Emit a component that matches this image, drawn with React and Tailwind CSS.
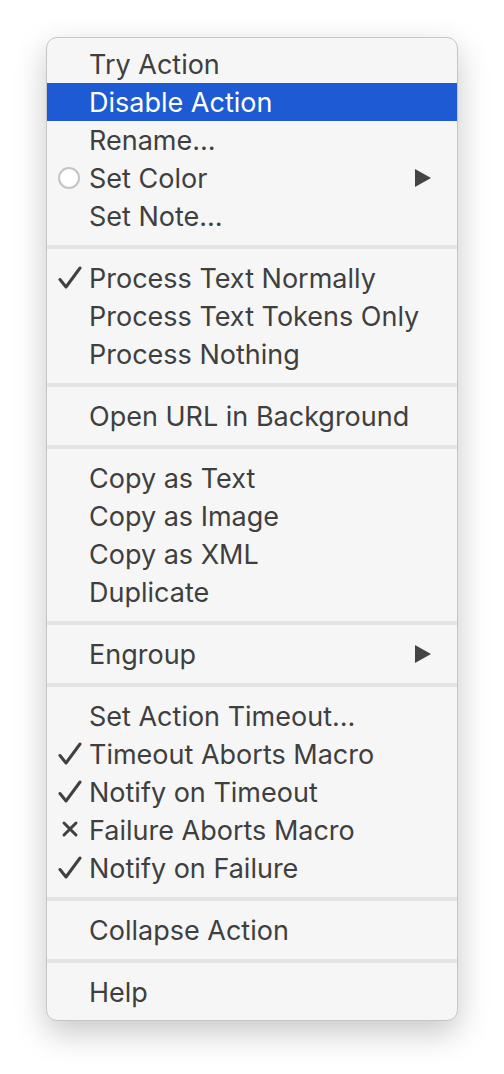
import { Fragment } from "react";

const GROUPS = [
    [
        { label: "Try Action" },
        { label: "Disable Action", active: true },
        { label: "Rename…" },
        { label: "Set Color", mark: "circle", submenu: true },
        { label: "Set Note…" },
    ],
    [
        { label: "Process Text Normally", mark: "check" },
        { label: "Process Text Tokens Only" },
        { label: "Process Nothing" },
    ],
    [{ label: "Open URL in Background" }],
    [
        { label: "Copy as Text" },
        { label: "Copy as Image" },
        { label: "Copy as XML" },
        { label: "Duplicate" },
    ],
    [{ label: "Engroup", submenu: true }],
    [
        { label: "Set Action Timeout…" },
        { label: "Timeout Aborts Macro", mark: "check" },
        { label: "Notify on Timeout", mark: "check" },
        { label: "Failure Aborts Macro", mark: "cross" },
        { label: "Notify on Failure", mark: "check" },
    ],
    [{ label: "Collapse Action" }],
    [{ label: "Help" }],
];

function Mark({ type }) {
    if (type === "check") {
        return (
            <svg width="26" height="24" viewBox="0 0 26 24">
                <path d="M3 13.5 L9 21 L23 2" fill="none" stroke="#404040" strokeWidth="3" strokeLinecap="round" strokeLinejoin="round" />
            </svg>
        );
    }
    if (type === "cross") {
        return (
            <svg width="26" height="24" viewBox="0 0 26 24">
                <path d="M7 5 L19 17 M19 5 L7 17" fill="none" stroke="#404040" strokeWidth="3" strokeLinecap="round" />
            </svg>
        );
    }
    if (type === "circle") {
        return <div className="w-[22px] h-[22px] rounded-full bg-white border-2 border-[#c4c4c4] ml-[1px]" />;
    }
    return null;
}

function Item({ item }) {
    return (
        <div
            className={`h-[38px] flex items-center pr-[25px] ${
                item.active ? "bg-[#1d5ad3] text-white" : "text-[#3f3f3f]"
            }`}
        >
            <div className="w-[42px] pl-[10px] flex items-center">
                {item.mark && <Mark type={item.mark} />}
            </div>
            <span className="flex-1 whitespace-nowrap">{item.label}</span>
            {item.submenu && (
                <svg width="18" height="20" viewBox="0 0 18 20">
                    <path d="M1 1 L17 10 L1 19 Z" fill="#444" />
                </svg>
            )}
        </div>
    );
}

export default function App() {
    return (
        <div className="w-[504px] h-[1074px] bg-white pt-[37px] pl-[46px]">
            <div
                className="w-[412px] bg-[#f6f6f6] border border-[#c6c6c6] rounded-[11px] pt-[7px] pb-[9px] shadow-[0_12px_32px_rgba(0,0,0,0.22)] text-[27px] leading-none"
                style={{ fontFamily: "Inter, 'Noto Sans', sans-serif" }}
            >
                {GROUPS.map((g, i) => (
                    <Fragment key={i}>
                        {i > 0 && (
                            <div className="h-[24px] flex items-center">
                                <div className="w-full h-[4px] bg-[#e4e4e4]" />
                            </div>
                        )}
                        {g.map((item) => (
                            <Item key={item.label} item={item} />
                        ))}
                    </Fragment>
                ))}
            </div>
        </div>
    );
}
